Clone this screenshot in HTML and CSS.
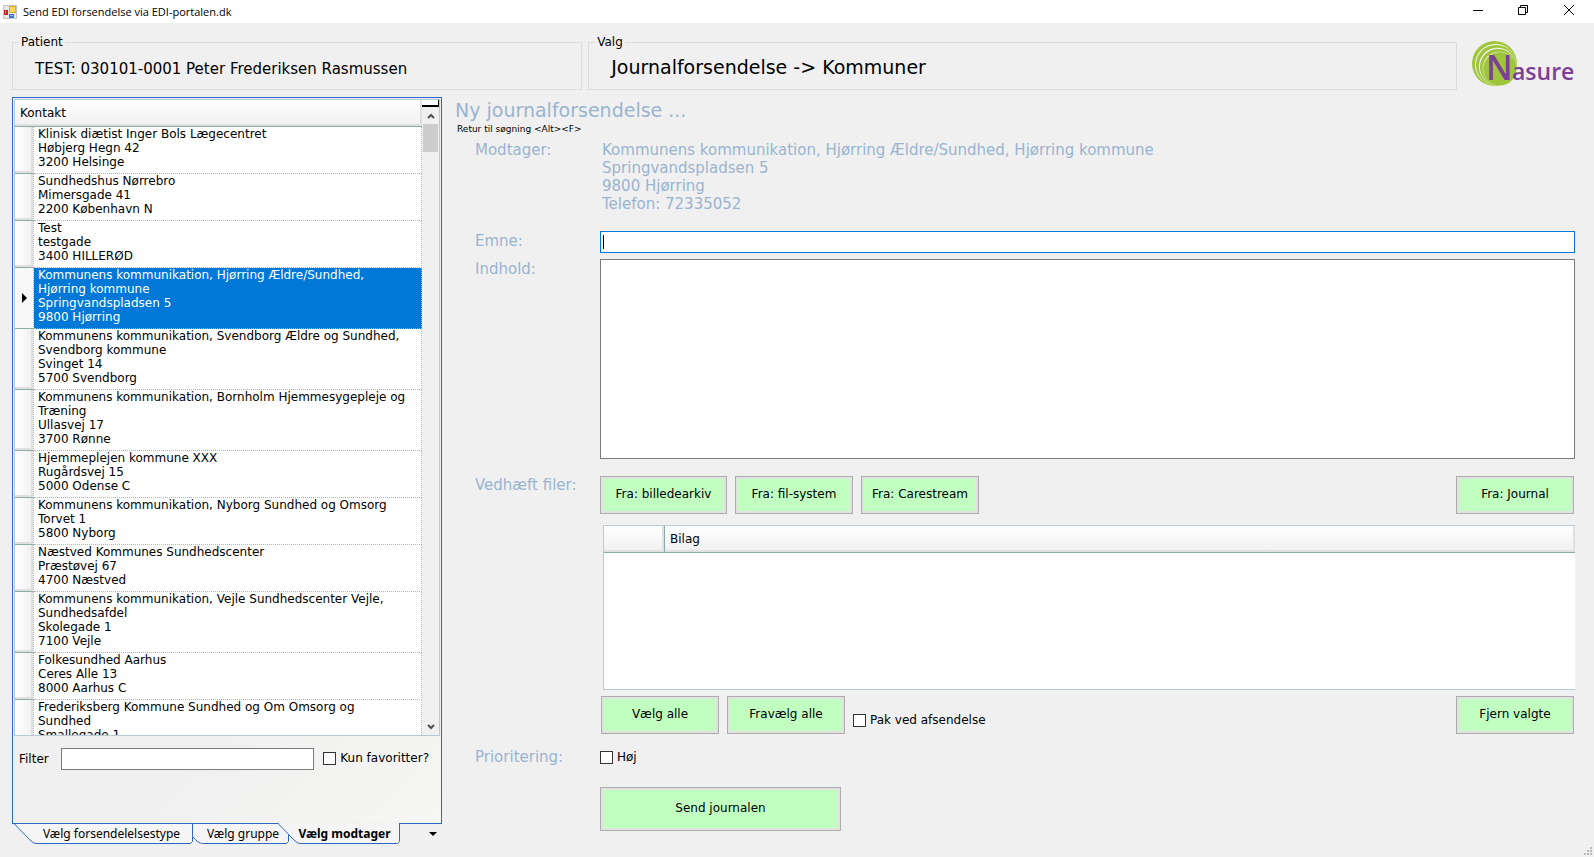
FILE: index.html
```html
<!DOCTYPE html>
<html lang="da">
<head>
<meta charset="utf-8">
<title>Send EDI forsendelse via EDI-portalen.dk</title>
<link rel="stylesheet" href="styles.css">
</head>
<body>
<header class="titlebar">
  <svg class="app-icon" viewBox="0 0 14 14" aria-hidden="true">
    <rect width="14" height="14" fill="#c4c4c4"/><rect x="1" y="1" width="12" height="12" fill="#e8e8e8"/>
    <rect x="1" y="5" width="4" height="5" fill="#c62a1c"/><rect x="2" y="6" width="1" height="2" fill="#f59a8c"/>
    <rect x="6" y="1" width="7" height="7" fill="#e9a91c"/><rect x="7" y="2" width="5" height="5" fill="#ffd75a"/>
    <rect x="6" y="9" width="5" height="4" fill="#3d74d8"/><rect x="7" y="10" width="3" height="1" fill="#8fb4f5"/>
  </svg>
  <h1 class="titlebar-text">Send EDI forsendelse via EDI-portalen.dk</h1>
  <div class="window-buttons">
    <button aria-label="Minimer"><svg viewBox="0 0 10 10"><path d="M0 5.5h10"/></svg></button>
    <button aria-label="Gendan"><svg viewBox="0 0 10 10"><path d="M.5 2.5h7v7h-7zM2.500 2.500v-2h7v7h-2"/></svg></button>
    <button aria-label="Luk"><svg viewBox="0 0 10 10"><path d="M0 0l10 10M10 0l-10 10"/></svg></button>
  </div>
</header>

<div class="summary">
  <fieldset class="group">
    <legend>Patient</legend>
    <p class="patient">TEST: 030101-0001 Peter Frederiksen Rasmussen</p>
  </fieldset>
  <fieldset class="group">
    <legend>Valg</legend>
    <p class="choice">Journalforsendelse -&gt; Kommuner</p>
  </fieldset>
  <svg class="logo" viewBox="0 0 104 46" role="img" aria-label="Nasure">
    <circle cx="22.500" cy="22.500" r="22.500" fill="#9fc63b"/>
    <circle cx="23.700" cy="23.600" r="20.800" fill="#edf2e0"/>
    <circle cx="24.200" cy="24.100" r="20.200" fill="#9fc63b"/>
    <circle cx="25.400" cy="25.300" r="18.600" fill="#edf2e0"/>
    <circle cx="26" cy="25.900" r="18" fill="#9fc63b"/>
    <circle cx="27.200" cy="27.300" r="16.600" fill="#edf2e0"/>
    <circle cx="27.800" cy="27.900" r="16.600" fill="#9fc63b"/>
    <text class="logo-n" x="14" y="39">N</text>
    <text class="logo-rest" x="40" y="39">asure</text>
  </svg>
</div>

<main class="workspace">
  <aside class="contacts">
    <div class="contact-grid">
      <div class="contact-rows">
        <table class="contact-table">
          <thead><tr><th colspan="2" scope="col">Kontakt</th></tr></thead>
          <tbody>
            <tr><td class="handle"></td><td>Klinisk diætist Inger Bols Lægecentret<br>Høbjerg Hegn 42<br>3200 Helsinge</td></tr>
            <tr><td class="handle"></td><td>Sundhedshus Nørrebro<br>Mimersgade 41<br>2200 København N</td></tr>
            <tr><td class="handle"></td><td>Test<br>testgade<br>3400 HILLERØD</td></tr>
            <tr class="selected"><td class="handle"><svg viewBox="0 0 5 10" aria-hidden="true"><path d="M0 0l5 5-5 5z"/></svg></td><td>Kommunens kommunikation, Hjørring Ældre/Sundhed,<br>Hjørring kommune<br>Springvandspladsen 5<br>9800 Hjørring</td></tr>
            <tr><td class="handle"></td><td>Kommunens kommunikation, Svendborg Ældre og Sundhed,<br>Svendborg kommune<br>Svinget 14<br>5700 Svendborg</td></tr>
            <tr><td class="handle"></td><td>Kommunens kommunikation, Bornholm Hjemmesygepleje og<br>Træning<br>Ullasvej 17<br>3700 Rønne</td></tr>
            <tr><td class="handle"></td><td>Hjemmeplejen kommune XXX<br>Rugårdsvej 15<br>5000 Odense C</td></tr>
            <tr><td class="handle"></td><td>Kommunens kommunikation, Nyborg Sundhed og Omsorg<br>Torvet 1<br>5800 Nyborg</td></tr>
            <tr><td class="handle"></td><td>Næstved Kommunes Sundhedscenter<br>Præstøvej 67<br>4700 Næstved</td></tr>
            <tr><td class="handle"></td><td>Kommunens kommunikation, Vejle Sundhedscenter Vejle,<br>Sundhedsafdel<br>Skolegade 1<br>7100 Vejle</td></tr>
            <tr><td class="handle"></td><td>Folkesundhed Aarhus<br>Ceres Alle 13<br>8000 Aarhus C</td></tr>
            <tr><td class="handle"></td><td>Frederiksberg Kommune Sundhed og Om Omsorg og<br>Sundhed<br>Smallegade 1</td></tr>
          </tbody>
        </table>
      </div>
      <div class="scrollbar">
        <span class="splitter"></span>
        <button aria-label="Rul op"><svg viewBox="0 0 8 6"><path d="M1 5l3-3 3 3"/></svg></button>
        <span class="thumb"></span>
        <button class="scroll-down" aria-label="Rul ned"><svg viewBox="0 0 8 6"><path d="M1 1l3 3 3-3"/></svg></button>
      </div>
    </div>
    <div class="filter">
      <label for="filter">Filter</label>
      <input id="filter" class="field" type="text">
      <label class="check"><input type="checkbox">Kun favoritter?</label>
    </div>
    <nav class="tabs">
      <svg class="tab-shape" viewBox="0 0 430 22" aria-hidden="true">
        <path fill="#f5f5f5" d="M2 .5L18 17q3.500 3.500 6 3.500H178.500l2-2V.5z"/>
        <path fill="#f5f5f5" d="M180.500 .5v13q6 7 10 7H274.500l2-2V.5z"/>
        <path fill="#f5f5f5" d="M266 .5L282 17q3.500 3.500 6 3.500H385.500l2-2V.5" />
        <path stroke="none" fill="#f2f2f2" d="M267 0h120v1H267z"/>
        <path d="M0 .5H266M387 .5H430" fill="none"/>
      </svg>
      <button class="tab tab-type">Vælg forsendelelsestype</button>
      <button class="tab tab-group">Vælg gruppe</button>
      <button class="tab tab-current">Vælg modtager</button>
      <button class="tab-menu" aria-label="Flere faner"><svg viewBox="0 0 8 4"><path d="M0 0h8l-4 4z"/></svg></button>
    </nav>
  </aside>

  <form class="message">
    <h2 class="heading">Ny journalforsendelse ...</h2>
    <a class="back" href="#">Retur til søgning &lt;Alt&gt;&lt;F&gt;</a>
    <div class="fields">
      <span class="caption">Modtager:</span>
      <address class="recipient">Kommunens kommunikation, Hjørring Ældre/Sundhed, Hjørring kommune<br>Springvandspladsen 5<br>9800 Hjørring<br>Telefon: 72335052</address>

      <label class="caption" for="subject">Emne:</label>
      <input id="subject" class="field subject" type="text" autofocus>

      <label class="caption" for="content">Indhold:</label>
      <textarea id="content" class="field content"></textarea>

      <span class="caption">Vedhæft filer:</span>
      <div class="attachments">
        <div class="button-row">
          <button type="button" class="action wide">Fra: billedearkiv</button>
          <button type="button" class="action">Fra: fil-system</button>
          <button type="button" class="action">Fra: Carestream</button>
          <button type="button" class="action last">Fra: Journal</button>
        </div>
        <div class="files">
          <table class="files-table">
            <thead><tr><th class="pick"></th><th scope="col">Bilag</th></tr></thead>
          </table>
        </div>
        <div class="button-row selection">
          <button type="button" class="action">Vælg alle</button>
          <button type="button" class="action">Fravælg alle</button>
          <label class="check pack"><input type="checkbox">Pak ved afsendelse</label>
          <button type="button" class="action last">Fjern valgte</button>
        </div>
      </div>

      <span class="caption">Prioritering:</span>
      <label class="check"><input type="checkbox">Høj</label>

      <button type="button" class="action send">Send journalen</button>
    </div>
  </form>
</main>
<svg class="grip" viewBox="0 0 8 8" aria-hidden="true"><path d="M6 0h2v2h-2zM3 3h2v2h-2zM6 3h2v2h-2zM0 6h2v2h-2zM3 6h2v2h-2zM6 6h2v2h-2z"/></svg>
</body>
</html>
```
FILE: styles.css
```css
* { box-sizing: border-box; }

body {
  margin: 0;
  height: 100vh;
  display: flex;
  flex-direction: column;
  overflow: hidden;
  background: #f0f0f0;
  color: #000;
  font: 12px/14px "DejaVu Sans", sans-serif;
}

h1, h2, p { margin: 0; font-weight: normal; }
button, input, textarea { font: inherit; color: inherit; border-radius: 0; }
button { padding: 0; border: 0; background: none; }
svg { display: block; }

.titlebar {
  display: flex;
  align-items: center;
  height: 23px;
  padding-left: 3px;
  background: #fff;
}
.app-icon { width: 14px; height: 14px; }
.titlebar-text { margin-left: 6px; font: 11px/16px "Open Sans", sans-serif; }
.window-buttons { display: flex; margin-left: auto; margin-bottom: 3px; }
.window-buttons button { width: 45px; height: 20px; display: grid; place-items: center; }
.window-buttons button:last-child { width: 47px; }
.window-buttons svg { width: 10px; height: 10px; fill: none; stroke: #000; }
.window-buttons { padding-right: 2px; }

.summary {
  display: grid;
  grid-template-columns: 571fr 870fr 114px;
  gap: 6px;
  padding: 12px 17px 0 12px;
}
.group {
  min-width: 0;
  height: 55px;
  margin: 0;
  padding: 0 20px;
  border: 1px solid #dcdcdc;
}
.group legend { margin-left: -14px; padding: 0 2px; }
.patient { font-size: 15px; line-height: 20px; padding: 10px 2px; }
.choice { font-size: 19px; line-height: 24px; padding: 6px 2px; }
.logo { width: 104px; height: 46px; margin: 6px 0 0 9px; overflow: visible; }
.logo text { font-family: "Open Sans", sans-serif; fill: #7b3f98; }
.logo-n { font-size: 34px; font-weight: 600; }
.logo-rest { font-size: 23px; font-weight: 600; }

.workspace { flex: 1; display: flex; min-height: 0; padding: 7px 19px 12px 12px; gap: 13px; }

.contacts {
  flex: none;
  width: 430px;
  display: flex;
  flex-direction: column;
  border: 1px solid #2f68c0;
  border-width: 1px 0 0;
}
.contact-grid {
  flex: 1;
  display: flex;
  min-height: 0;
  padding: 1px 1px 0;
  border: 1px solid #2f68c0;
  border-width: 0 1px;
}
.contact-rows {
  flex: 1;
  overflow: hidden;
  background: #fff;
  border: 1px solid #b8c9d9;
  border-right: 0;
}
.contact-table { width: 100%; border-collapse: separate; border-spacing: 0; }
.contact-table th, .files-table th {
  height: 27px;
  padding: 0 5px;
  text-align: left;
  font-weight: normal;
  background: linear-gradient(#fff, #f0f0f0);
  border-bottom: 1px solid #8aacab;
  box-shadow: inset -2px -2px #e0e0e0;
}
.contact-table td {
  padding: 0 0 4px 4px;
  white-space: nowrap;
  border: 0 dotted #b5b5b5;
  border-width: 0 1px 1px 0;
}
.contact-table .handle {
  width: 19px;
  padding: 0;
  vertical-align: middle;
  background: linear-gradient(90deg, #fff, #f0f0f0);
  border-bottom: 1px solid #8aacab;
  box-shadow: inset -2px -2px #e0e0e0;
}
.handle svg { width: 5px; height: 10px; margin-left: 7px; }
.selected td { background: #0078d7; color: #fff; }
.selected .handle { background: #f8f8f8; box-shadow: none; }

.scrollbar {
  width: 18px;
  display: flex;
  flex-direction: column;
  background: #f0f0f0;
  border: 1px solid #b8c9d9;
  border-left: 0;
}
.scrollbar button { height: 17px; display: grid; place-items: center; }
.scrollbar svg { width: 8px; height: 6px; fill: none; stroke: #505050; stroke-width: 2; }
.splitter { height: 7px; border: solid #000; border-width: 0 1px 2px 0; background: #fff; }
.thumb { height: 28px; margin: 0 1px; background: #cdcdcd; }
.scrollbar .scroll-down { margin-top: auto; }

.filter {
  height: 87px;
  display: flex;
  align-items: flex-start;
  padding: 12px 6px 0;
  border: 1px solid #2f68c0;
  border-width: 0 1px;
  background: linear-gradient(135deg, #f0f0f0 40%, #f6f6f4);
}
.filter > label { margin-top: 4px; }
.filter .field { flex: 1; min-width: 0; height: 22px; margin: 0 9px 0 12px; }
.filter .check { margin: 3px 6px 0 0; }

.field { margin: 0; padding: 2px; border: 1px solid #7a7a7a; background: #fff; outline: 0; }

.check { display: flex; align-items: center; gap: 4px; }
.check input {
  appearance: none;
  flex: none;
  width: 13px;
  height: 13px;
  margin: 0;
  border: 1px solid #333;
  background: #fff;
}

.tabs { position: relative; display: flex; height: 22px; font: 12px/20px "Noto Sans", sans-serif; }
.tab-shape { position: absolute; inset: 0; width: 430px; height: 22px; stroke: #2f68c0; }
.tab { position: relative; white-space: nowrap; }
.tab-type { width: 181px; padding-left: 18px; }
.tab-group { width: 96px; padding-left: 4px; }
.tab-current { width: 111px; padding-left: 0; font-weight: 700; }
.tab-menu { position: relative; margin: 0 5px 0 auto; }
.tab-menu svg { width: 8px; height: 4px; }

.message { flex: 1; min-width: 0; }
.heading { font-size: 19px; line-height: 27px; color: #99b4d1; }
.back { display: block; margin-left: 2px; font-size: 9px; line-height: 11px; color: #000; text-decoration: none; }
.fields {
  display: grid;
  grid-template-columns: 125px 1fr;
  padding-left: 20px;
  margin-top: 6px;
}
.caption, .recipient { font-size: 15px; font-style: normal; line-height: 18px; color: #99b4d1; }
label.caption { padding-top: 1px; }
.recipient { margin: 0 0 18px 2px; }
.subject {
  height: 22px;
  margin-bottom: 6px;
  border-color: #0078d7;
  background: #fff linear-gradient(#000, #000) 2px center / 1px 14px no-repeat;
  caret-color: transparent;
}
.content { display: block; height: 200px; resize: none; margin-bottom: 17px; }
.button-row { display: flex; gap: 8px; padding-right: 1px; }
.selection { padding-left: 1px; }
.action {
  min-width: 118px;
  height: 38px;
  padding: 0 10px 3px;
  white-space: nowrap;
  background: #c0ffc0;
  border: 1px solid #adadad;
  box-shadow: inset 0 0 0 2px #e1e1e1;
}
.wide { min-width: 127px; }
.last { margin-left: auto; }
.pack { padding-top: 10px; }
.files { height: 165px; margin: 11px 0 6px 3px; background: #fff; border: 1px solid #b8c9d9; border-right: 0; }
.files-table { width: 100%; border-spacing: 0; }
.files-table .pick { width: 61px; border-right: 1px solid #8aacab; }
.attachments { margin-bottom: 14px; }
.send { grid-column: 2; justify-self: start; width: 241px; height: 44px; margin-top: 21px; }

.grip { position: absolute; right: 2px; bottom: 2px; width: 8px; height: 8px; fill: #b8b8b8; }
```
